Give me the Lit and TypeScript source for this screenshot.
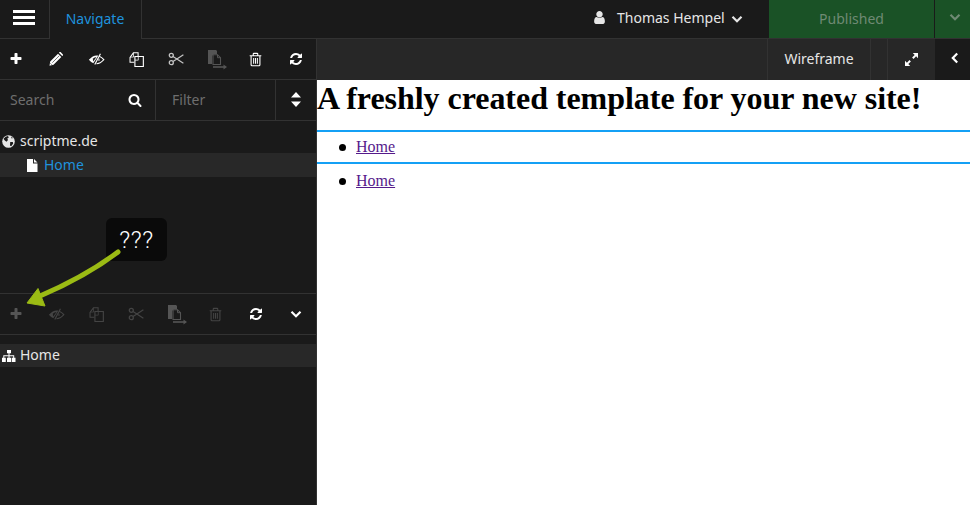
import { LitElement, html, css, svg } from 'lit';
import { customElement } from 'lit/decorators.js';

const fa = (d: unknown, size = 14) => html`<svg width=${size} height=${size} viewBox="0 0 1792 1792" fill="currentColor">${d}</svg>`;
const ico = (d: unknown, size = 16) => html`<svg width=${size} height=${size} viewBox="0 0 16 16" fill="none" stroke="currentColor" stroke-width="1.2">${d}</svg>`;

const plus = () => fa(svg`<path d="M1600 736v192q0 40-28 68t-68 28h-416v416q0 40-28 68t-68 28h-192q-40 0-68-28t-28-68v-416h-416q-40 0-68-28t-28-68v-192q0-40 28-68t68-28h416v-416q0-40 28-68t68-28h192q40 0 68 28t28 68v416h416q40 0 68 28t28 68z"/>`);
const sync = () => fa(svg`<path d="M1639 1056q0 5-1 7-64 268-268 434.5t-478 166.5q-146 0-282.5-55t-243.5-157l-129 129q-19 19-45 19t-45-19-19-45v-448q0-26 19-45t45-19h448q26 0 45 19t19 45-19 45l-137 137q71 66 161 102t187 36q134 0 250-65t186-179q11-17 53-117 8-23 30-23h192q13 0 22.5 9.5t9.5 22.5zm25-800v448q0 26-19 45t-45 19h-448q-26 0-45-19t-19-45 19-45l138-138q-148-137-349-137-134 0-250 65t-186 179q-11 17-53 117-8 23-30 23h-199q-13 0-22.5-9.5t-9.5-22.5v-7q65-268 270-434.5t480-166.5q146 0 284 55.5t245 156.5l130-129q19-19 45-19t45 19 19 45z"/>`);
const search = () => fa(svg`<path d="M1216 832q0-185-131.5-316.5t-316.5-131.5-316.5 131.5-131.5 316.5 131.5 316.5 316.5 131.5 316.5-131.5 131.5-316.5zm512 832q0 52-38 90t-90 38q-54 0-90-38l-343-342q-179 124-399 124-143 0-273.5-55.5t-225-150-150-225-55.5-273.5 55.5-273.5 150-225 225-150 273.5-55.5 273.5 55.5 225 150 150 225 55.5 273.5q0 220-124 399l343 343q37 37 37 90z"/>`);
const user = () => fa(svg`<path d="M1536 1399q0 109-62.5 187t-150.5 78h-854q-88 0-150.5-78t-62.5-187q0-85 8.5-160.5t31.5-152 58.5-131 94-89 134.5-34.5q131 128 313 128t313-128q76 0 134.5 34.5t94 89 58.5 131 31.5 152 8.5 160.5zm-256-887q0 159-112.5 271.5t-271.5 112.5-271.5-112.5-112.5-271.5 112.5-271.5 271.5-112.5 271.5 112.5 112.5 271.5z"/>`, 15);

const pencil = () => ico(svg`<path fill="currentColor" stroke="none" d="M2.2 10.500 10 2.700l3.300 3.300-7.800 7.800-4 .9zM10.900 1.800l.7-.7q.5-.4 1 0l2.300 2.300q.4.5 0 1l-.7.7z"/><path stroke="#1a1a1a" stroke-width=".6" d="M4.300 11.700 11.200 4.800M2.400 12.300l1.500 1.500"/>`);
const eyeSlash = () => ico(svg`<path d="M10.500 5Q13 6 14.900 8.200 11.500 12 8 12" stroke-width="1"/><path fill="currentColor" stroke="none" d="M.8 8.200Q4.500 4.200 8 4.200h1.800L5 11.500Q2.700 10.400.8 8.200z"/><path fill="#1a1a1a" stroke="none" d="M7.800 5.800 5 9.900Q4 8.200 5.200 6.800 6.300 5.600 7.800 5.800z"/><path stroke-width="1.100" d="M11.700 2.600 6.400 12.800"/><path d="M10 7q.7 1.200.2 2.300" stroke-width="1"/>`, 17);
const copy = () => ico(svg`<path d="M5.700 11H1.100V5.700L4.700.9h5v3.800" stroke-width="1.100"/><path d="M4.800 1.200v4.200H1.300" stroke-width=".8"/><path d="M6.300 4.800h9v10.600H6.300V8.600z" stroke-width="1.200"/><path d="M9.900 4.900v3.800H6.400" stroke-width=".8"/>`, 15);
const scissors = () => ico(svg`<circle cx="3.300" cy="4.300" r="2" stroke-width="1.300"/><circle cx="3.300" cy="11.700" r="2" stroke-width="1.300"/><path d="M5 5.500 15.400 12.300M5 10.500 15.400 3.700" stroke-width="1.200"/>`);
const paste = () => html`<svg class="paste" width="19" height="20" viewBox="0 0 19 20" fill="none" stroke="currentColor"><path fill="currentColor" stroke="none" d="M0 0h8l1 1v3h-3l-2 2v8H0z"/><path d="M5 4.700h4.500l3 3v6.800H5z" stroke-width="1.100"/><path d="M9.500 4.700v3h3" stroke-width="1"/><path d="M5 17h11" stroke-width="1.600"/><path fill="currentColor" stroke="none" d="M15.500 14.400 19 17l-3.500 2.600z"/></svg>`;
const trash = () => html`<svg class="trash" width="15" height="15" viewBox="0 0 16 16" fill="none" stroke="currentColor" stroke-width="1.200"><path d="M3.300 4.500v9.200q0 1 1 1h7.400q1 0 1-1V4.500M1.800 4h12.400M5.600 3.800V2.200q0-.7.7-.7h3.400q.7 0 .7.700v1.600"/><path d="M6 6.500v6M8 6.500v6M10 6.500v6" stroke-width="1.100"/></svg>`;
const caret = (cls = '') => html`<svg class=${cls} width="12" height="12" viewBox="0 0 12 12" fill="none" stroke="currentColor" stroke-width="2.200"><path d="M1.500 3.800 6 8.200l4.500-4.400"/></svg>`;
const sort = () => html`<svg width="10" height="15" viewBox="0 0 10 15" fill="currentColor"><path d="M5 0l5 5.600H0zM0 9.400h10L5 15z"/></svg>`;
const globe = () => html`<svg width="13" height="13" viewBox="0 0 13 13"><circle cx="6.500" cy="6.500" r="6.300" fill="currentColor"/><path fill="#1a1a1a" d="M1.500 3.800Q3.500 1 6 1l.800 1.400L5.300 3.600 6 5 4.500 6.800 2.800 5.600zM8.200 7h2.600l.4 1.600-2 2.600L8 10.500zM9 1.500l2 1.500-1.300.600z"/></svg>`;
const file = () => html`<svg width="11" height="13" viewBox="0 0 11 13" fill="currentColor"><path d="M0 0h6v4.500h4.500V13H0zM7 0l3.500 3.500H7z"/></svg>`;
const sitemap = () => html`<svg width="14" height="13" viewBox="0 0 14 13" fill="currentColor"><path d="M5 1h4v3.200H7.500v2h4.700v2.500h1.300V13h-3.800V8.700h1.500V7.300H7.500v1.400H9V13H5V8.700h1.500V7.300H2.300v1.400h1.500V13H0V8.700h1.300V6.200h5.200v-2H5z"/></svg>`;
const expand = () => html`<svg width="13" height="13" viewBox="0 0 13 13" fill="currentColor"><path d="M7.800 0H13v5.200l-1.900-1.900-2.600 2.600-1.400-1.400 2.600-2.600zM5.200 13H0V7.800l1.900 1.900 2.600-2.600 1.400 1.400-2.600 2.600z"/></svg>`;

@customElement('app-root')
export class AppRoot extends LitElement {
  static styles = css`
    :host {
      display: block;
      height: 505px;
      overflow: hidden;
      position: relative;
      font-family: "Noto Sans", sans-serif;
      font-size: 14px;
      color: #fff;
      background: #1a1a1a;
    }
    .cell { display: flex; align-items: center; justify-content: center; }
    .up { margin-bottom: 2px; }
    .topbar {
      display: flex;
      height: 39px;
      box-sizing: border-box;
      border-bottom: 1px solid #323232;
    }
    .burger {
      width: 50px;
      box-sizing: border-box;
      border-right: 1px solid #323232;
      flex-direction: column;
      gap: 3px;
      padding: 0 4px 3px 3px;
    }
    .burger i { display: block; width: 22px; height: 3px; background: #fff; }
    .tab {
      width: 92px;
      height: 39px;
      box-sizing: border-box;
      border-right: 1px solid #323232;
      background: #1a1a1a;
      color: #1f92dd;
      padding: 0 1px 3px 0;
    }
    .spacer { flex: 1; }
    .user {
      width: 177px;
      justify-content: flex-start;
      gap: 8px;
      color: #e6e6e6;
    }
    .user > svg:first-child { margin-bottom: 3px; }
    .user .name { margin: 0 0 3px 2px; }
    .user .more { margin-left: -2px; }
    .publish {
      width: 165px;
      height: 38px;
      background: #1a5226;
      color: #6f8a74;
      padding-bottom: 2px;
      box-sizing: border-box;
    }
    .publish-more {
      width: 35px;
      height: 38px;
      box-sizing: border-box;
      margin-left: 1px;
      background: #1a5226;
      color: #6f8a74;
      padding: 0 0 4px 5px;
    }
    .main { display: flex; height: 466px; }
    .sidebar {
      width: 317px;
      box-sizing: border-box;
      border-right: 1px solid #323232;
      display: flex;
      flex-direction: column;
      flex: none;
      overflow: hidden;
    }
    .tools {
      display: flex;
      height: 41px;
      box-sizing: border-box;
      border-bottom: 1px solid #323232;
      flex: none;
    }
    .tools.lower-bar { height: 42px; border-top: 1px solid #323232; }
    .tools .row { display: flex; margin-left: -4px; }
    .tools .cell { width: 40px; flex: none; color: #fff; }
    .tools .cell.half { color: #c4c4c4; }
    .tools .cell.off { color: #555; }
    .tools .cell.faint { color: #444; }
    .paste { margin: 2px 0 0 3px; }
    .trash { margin-right: 2px; }
    .filters {
      display: flex;
      height: 41px;
      box-sizing: border-box;
      border-bottom: 1px solid #323232;
      flex: none;
      color: #6e6e6e;
    }
    .search {
      width: 156px;
      box-sizing: border-box;
      border-right: 1px solid #323232;
      justify-content: space-between;
      padding: 0 13px 0 10px;
    }
    .search svg { color: #fff; margin-bottom: 1px; }
    .filter {
      width: 120px;
      box-sizing: border-box;
      border-right: 1px solid #323232;
      justify-content: flex-start;
      padding-left: 16px;
    }
    .sort { flex: 1; color: #fff; padding-bottom: 1px; }
    .tree { height: 172px; box-sizing: border-box; padding-top: 8px; flex: none; }
    .node {
      height: 24px;
      display: flex;
      align-items: center;
      color: #e6e6e6;
      padding-left: 2px;
      gap: 5px;
    }
    .node.page { padding-left: 27px; gap: 6px; background: #282828; color: #1f92dd; }
    .node.page svg { color: #fff; }
    .node.struct { background: #282828; gap: 4px; height: 23px; }
    .node.struct svg { color: #fff; }
    .lower { padding-top: 9px; }
    .preview { flex: 1; display: flex; flex-direction: column; min-width: 0; }
    .viewbar {
      height: 41px;
      box-sizing: border-box;
      display: flex;
      background: #272727;
      justify-content: flex-end;
      flex: none;
    }
    .viewbar .cell {
      box-sizing: border-box;
      border-left: 1px solid #323232;
      color: #e6e6e6;
    }
    .wire { width: 103px; }
    .gap { width: 17px; }
    .viewbar .full { width: 48px; color: #fff; padding-bottom: 1px; }
    .viewbar .back { width: 35px; background: #1a1a1a; border-left: 0; color: #fff; padding: 0 0 3px 4px; }
    .left { transform: rotate(90deg); }
    .page-view {
      flex: 1;
      background: #fff;
      color: #000;
      font-family: "Liberation Serif", serif;
      font-size: 16px;
    }
    h1 {
      margin: 0;
      font-size: 32px;
      line-height: 37px;
      letter-spacing: -0.045px;
      padding-bottom: 13px;
      white-space: nowrap;
    }
    ul { margin: 0; padding: 6px 0 6px 39px; list-style: none; }
    ul.one { border-top: 2px solid #14a0f5; border-bottom: 2px solid #14a0f5; }
    ul.two { padding-top: 8px; }
    li { position: relative; }
    li::before {
      content: "";
      position: absolute;
      left: -17px;
      top: 6px;
      width: 7px;
      height: 7px;
      border-radius: 50%;
      background: #000;
    }
    a { color: #551a8b; text-decoration: underline; }
    .tip {
      position: absolute;
      left: 106px;
      top: 218px;
      width: 61px;
      height: 43px;
      border-radius: 6px;
      background: #0a0a0a;
      color: #fff;
      font-family: Roboto, sans-serif;
      font-weight: 300;
      font-size: 24px;
      letter-spacing: 0.6px;
      display: flex;
      align-items: center;
      justify-content: center;
    }
    .arrow { position: absolute; left: 0; top: 0; pointer-events: none; }
  `;

  render() {
    return html`
      <div class="topbar">
        <div class="cell burger"><i></i><i></i><i></i></div>
        <div class="cell tab">Navigate</div>
        <div class="spacer"></div>
        <div class="cell user">${user()}<span class="name">Thomas Hempel</span>${caret('more')}</div>
        <div class="cell publish">Published</div>
        <div class="cell publish-more">${caret()}</div>
      </div>
      <div class="main">
        <div class="sidebar">
          <div class="tools">
            <div class="row">
              <div class="cell">${plus()}</div>
              <div class="cell">${pencil()}</div>
              <div class="cell">${eyeSlash()}</div>
              <div class="cell">${copy()}</div>
              <div class="cell half">${scissors()}</div>
              <div class="cell off">${paste()}</div>
              <div class="cell">${trash()}</div>
              <div class="cell">${sync()}</div>
            </div>
          </div>
          <div class="filters">
            <div class="cell search"><span class="up">Search</span>${search()}</div>
            <div class="cell filter"><span class="up">Filter</span></div>
            <div class="cell sort">${sort()}</div>
          </div>
          <div class="tree">
            <div class="node">${globe()}<span class="up">scriptme.de</span></div>
            <div class="node page">${file()}<span class="up">Home</span></div>
          </div>
          <div class="tools lower-bar">
            <div class="row">
              <div class="cell off">${plus()}</div>
              <div class="cell faint">${eyeSlash()}</div>
              <div class="cell faint">${copy()}</div>
              <div class="cell faint">${scissors()}</div>
              <div class="cell off">${paste()}</div>
              <div class="cell faint">${trash()}</div>
              <div class="cell">${sync()}</div>
              <div class="cell">${caret()}</div>
            </div>
          </div>
          <div class="lower">
            <div class="node struct">${sitemap()}<span class="up">Home</span></div>
          </div>
        </div>
        <div class="preview">
          <div class="viewbar">
            <div class="cell wire"><span class="up">Wireframe</span></div>
            <div class="cell gap"></div>
            <div class="cell full">${expand()}</div>
            <div class="cell back">${caret('left')}</div>
          </div>
          <div class="page-view">
            <h1>A freshly created template for your new site!</h1>
            <ul class="one"><li><a>Home</a></li></ul>
            <ul class="two"><li><a>Home</a></li></ul>
          </div>
        </div>
      </div>
      <div class="tip">???</div>
      <svg class="arrow" width="970" height="505" viewBox="0 0 970 505" fill="none">
        <path d="M118 252Q85.500 276.500 40 296" stroke="#9bbb14" stroke-width="5" stroke-linecap="round"/>
        <path d="M38 288.500 27 303 45 306z" fill="#9bbb14" stroke="#9bbb14" stroke-linejoin="round"/>
      </svg>
    `;
  }
}
